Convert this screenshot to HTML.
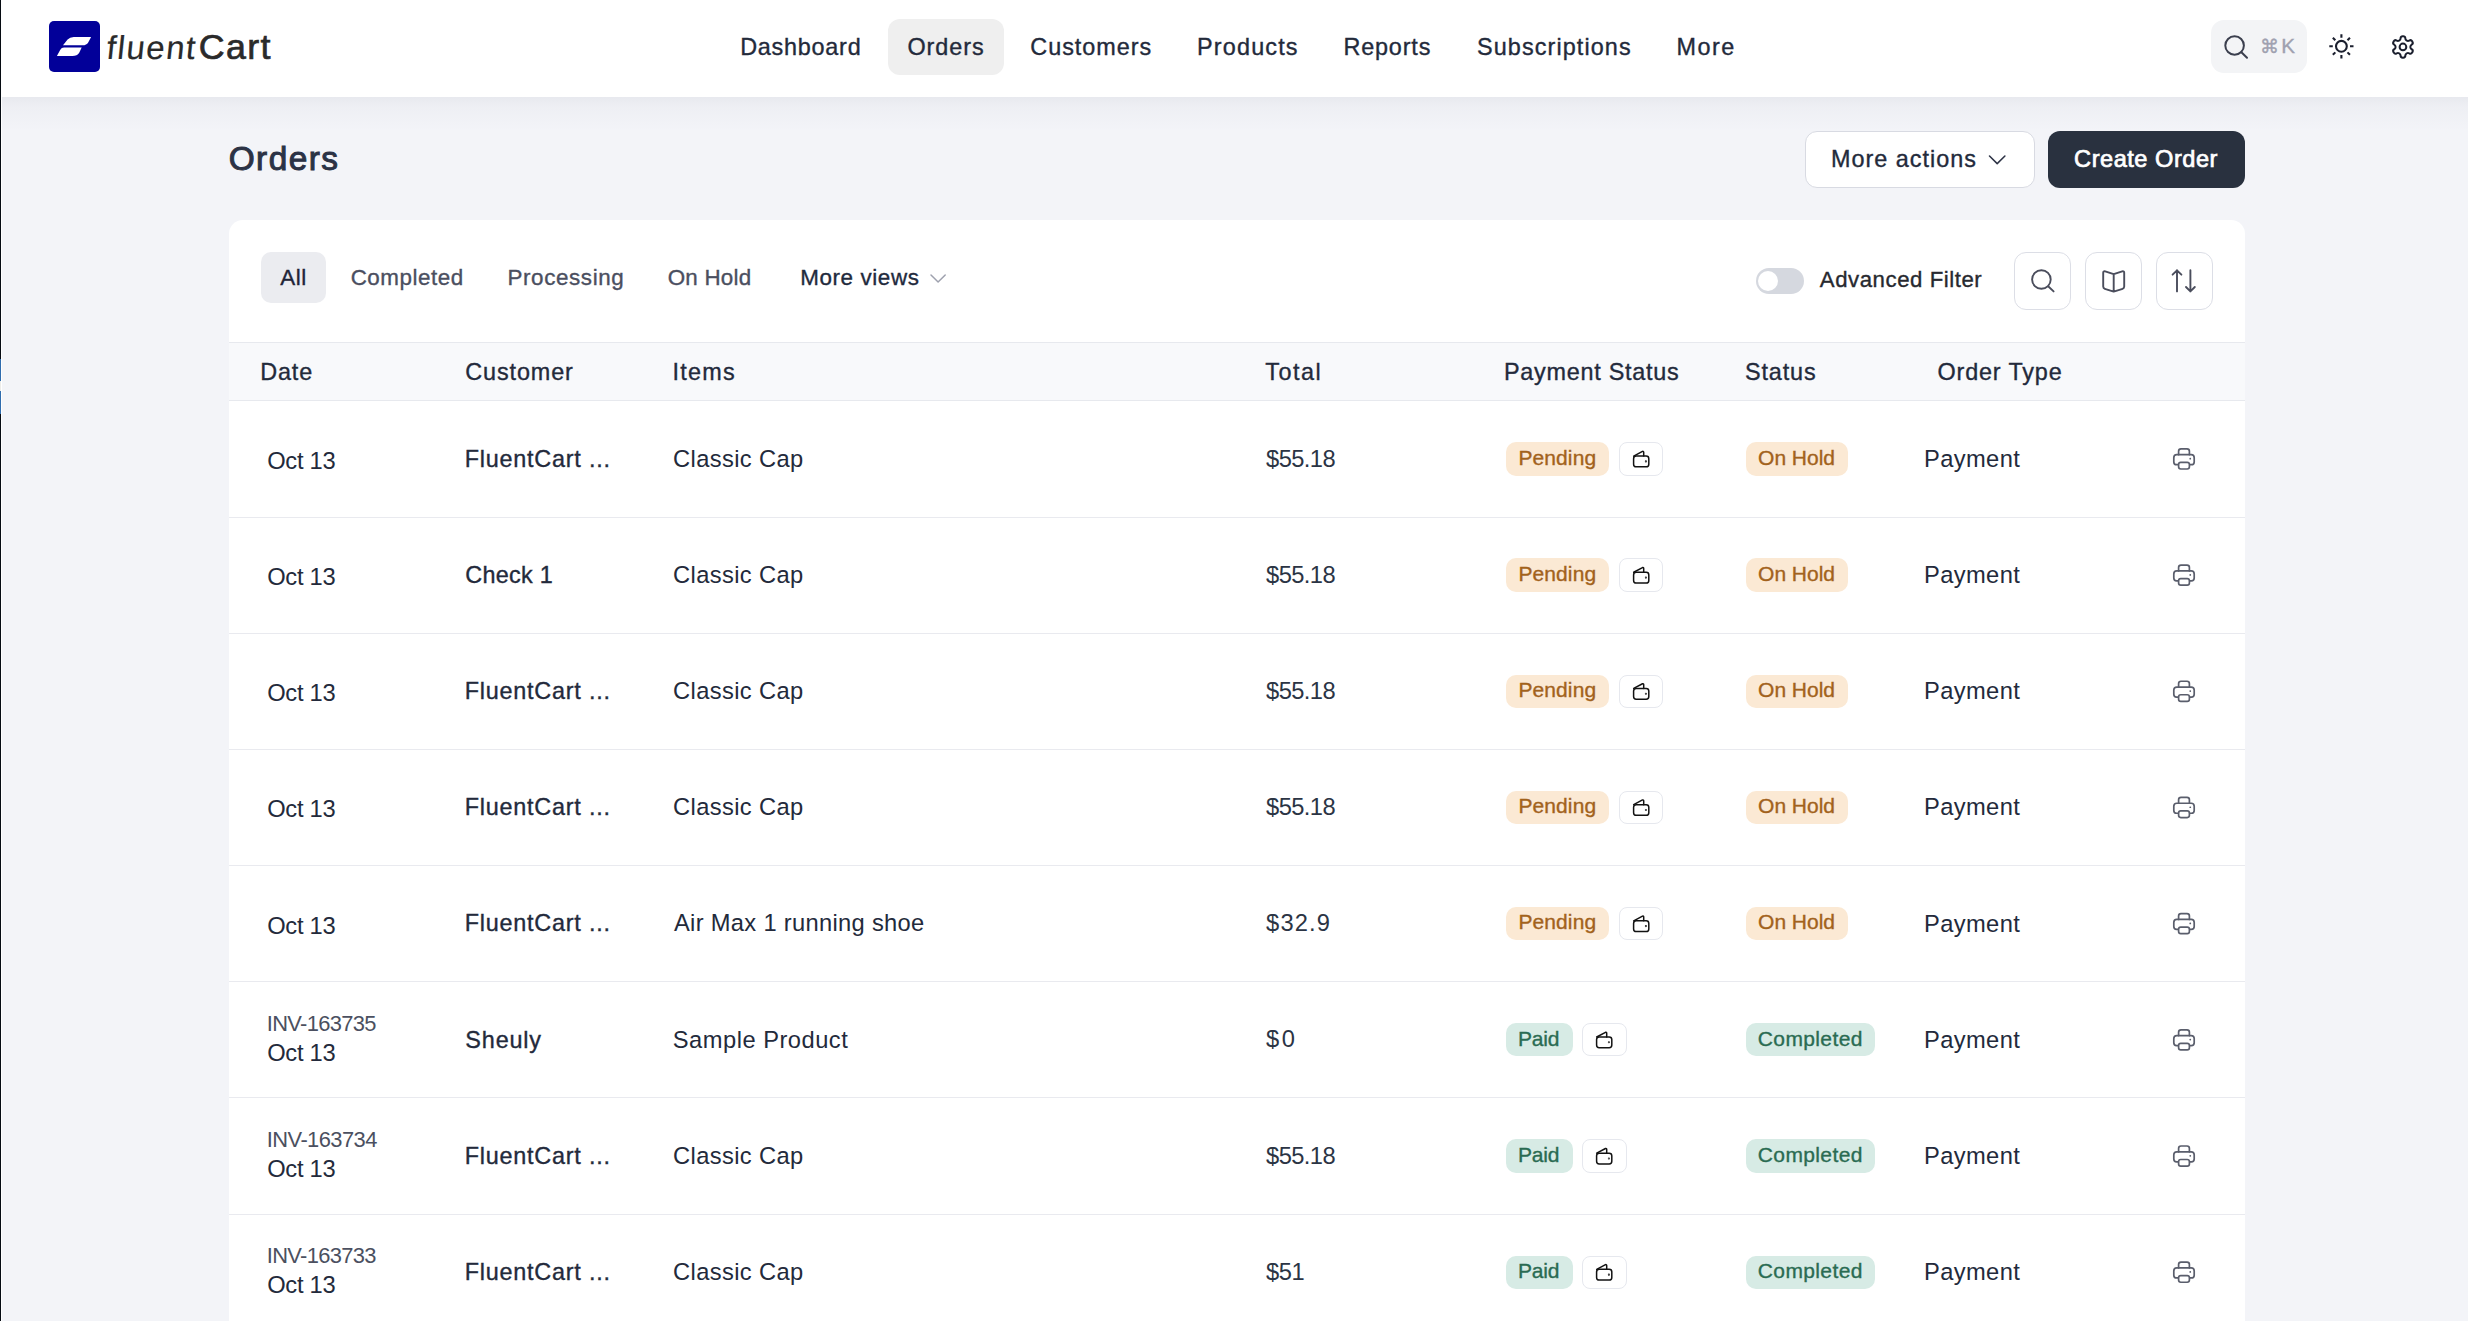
<!DOCTYPE html>
<html><head><meta charset="utf-8"><title>Orders - FluentCart</title><style>
body{margin:0;width:2468px;height:1321px;overflow:hidden;background:#f3f4f8;position:relative;font-family:"Liberation Sans",sans-serif}
.t{position:absolute;line-height:1;white-space:nowrap}
.a{position:absolute;box-sizing:border-box}
svg{position:absolute;overflow:visible}
</style></head><body>
<div class="a" style="left:0px;top:0px;width:1px;height:1321px;background:#060b12"></div>
<div class="a" style="left:1px;top:0px;width:1px;height:1321px;background:#ffffff"></div>
<div class="a" style="left:0px;top:359px;width:1px;height:22px;background:#2f6cae"></div>
<div class="a" style="left:0px;top:391px;width:1px;height:23px;background:#2f6cae"></div>
<div class="a" style="left:0px;top:381px;width:1px;height:10px;background:#ecebe8"></div>
<div class="a" style="left:2px;top:97px;width:2466px;height:34px;background:linear-gradient(rgba(25,30,60,0.05),rgba(25,30,60,0.022) 30%,rgba(25,30,60,0))"></div>
<div class="a" style="left:2px;top:0px;width:2466px;height:97px;background:#fff"></div>
<div class="a" style="left:49px;top:21px;width:51px;height:51px;background:#020099;border-radius:5px"></div>
<svg style="left:0;top:0" width="1" height="1"><path fill="#fff" d="M63,45.2 L67.6,39.6 Q69.8,37 73.8,37 L91.1,37 L88.2,42.4 Q86.6,45.2 82.6,45.2 Z M56.9,56 L60.3,49.8 Q61.5,47.6 64,47.6 L81.7,47.6 L79.2,52.8 Q77.2,56 72.4,56 Z"/></svg>
<div class="a" style="left:888px;top:19px;width:116px;height:56px;background:#efefef;border-radius:12px"></div>
<div class="a" style="left:2211px;top:20px;width:96px;height:53px;background:#f3f4f6;border-radius:13px"></div>
<svg style="left:0;top:0" width="1" height="1"><g fill="none" stroke="#3b3f4e" stroke-width="2" stroke-linecap="round"><circle cx="2234.6" cy="45.5" r="9.3"/><path d="M2241.4,52.2 L2247,57.8"/></g></svg>
<svg style="left:0;top:0" width="1" height="1"><g fill="none" stroke="#1b1f2e" stroke-width="2.1"><circle cx="2341.4" cy="46.3" r="5.4"/><path d="M2350.00,46.30 L2353.50,46.30 M2347.48,52.38 L2349.96,54.86 M2341.40,54.90 L2341.40,58.40 M2335.32,52.38 L2332.84,54.86 M2332.80,46.30 L2329.30,46.30 M2335.32,40.22 L2332.84,37.74 M2341.40,37.70 L2341.40,34.20 M2347.48,40.22 L2349.96,37.74"/></g></svg>
<svg style="left:2390.04px;top:33.94px" width="25.92" height="25.92" viewBox="0 0 24 24"><g fill="none" stroke="#1b1f2e" stroke-width="1.852" stroke-linecap="round" stroke-linejoin="round"><path d="M12.22 2h-.44a2 2 0 0 0-2 2v.18a2 2 0 0 1-1 1.73l-.43.25a2 2 0 0 1-2 0l-.15-.08a2 2 0 0 0-2.73.73l-.22.38a2 2 0 0 0 .73 2.73l.15.1a2 2 0 0 1 1 1.72v.51a2 2 0 0 1-1 1.74l-.15.09a2 2 0 0 0-.73 2.73l.22.38a2 2 0 0 0 2.73.73l.15-.08a2 2 0 0 1 2 0l.43.25a2 2 0 0 1 1 1.73V20a2 2 0 0 0 2 2h.44a2 2 0 0 0 2-2v-.18a2 2 0 0 1 1-1.73l.43-.25a2 2 0 0 1 2 0l.15.08a2 2 0 0 0 2.73-.73l.22-.39a2 2 0 0 0-.73-2.73l-.15-.08a2 2 0 0 1-1-1.74v-.5a2 2 0 0 1 1-1.74l.15-.09a2 2 0 0 0 .73-2.73l-.22-.38a2 2 0 0 0-2.73-.73l-.15.08a2 2 0 0 1-2 0l-.43-.25a2 2 0 0 1-1-1.73V4a2 2 0 0 0-2-2z"/><circle cx="12" cy="12" r="3.1"/></g></svg>
<div class="a" style="left:1805px;top:131px;width:230px;height:57px;background:#fff;border:1px solid #d8dae2;border-radius:12px"></div>
<svg style="left:0;top:0" width="1" height="1"><path d="M1989.5,156 L1997.2,163.6 L2004.9,156" fill="none" stroke="#2d3345" stroke-width="1.55" stroke-linecap="round" stroke-linejoin="round"/></svg>
<div class="a" style="left:2048px;top:131px;width:197px;height:57px;background:#29313f;border-radius:12px"></div>
<div class="a" style="left:229px;top:220px;width:2016px;height:1200px;background:#fff;border-radius:14px"></div>
<div class="a" style="left:261px;top:252px;width:65px;height:51px;background:#ebecf0;border-radius:10px"></div>
<svg style="left:0;top:0" width="1" height="1"><path d="M931,275 L938.1,282 L945.2,275" fill="none" stroke="#9ea1ae" stroke-width="1.5" stroke-linecap="round" stroke-linejoin="round"/></svg>
<div class="a" style="left:1756px;top:268px;width:48px;height:26px;background:#d5d8df;border-radius:13px"></div>
<div class="a" style="left:1757.5px;top:270.7px;width:20.4px;height:20.4px;background:#fff;border-radius:50%"></div>
<div class="a" style="left:2014px;top:252px;width:57px;height:58px;background:#fff;border:1px solid #dcdee6;border-radius:12px"></div>
<div class="a" style="left:2085px;top:252px;width:57px;height:58px;background:#fff;border:1px solid #dcdee6;border-radius:12px"></div>
<div class="a" style="left:2156px;top:252px;width:57px;height:58px;background:#fff;border:1px solid #dcdee6;border-radius:12px"></div>
<svg style="left:0;top:0" width="1" height="1"><g fill="none" stroke="#4a4d5c" stroke-width="1.9" stroke-linecap="round" stroke-linejoin="round"><circle cx="2041.4" cy="279.5" r="9.3"/><path d="M2048.4,286.5 L2053.6,291.4"/><path d="M2113.7,274.2 L2105.2,271.3 Q2103.2,270.8 2103.2,272.8 L2103.2,286.6 Q2103.2,288.3 2104.8,288.8 L2113.7,291.6 L2122.6,288.8 Q2124.2,288.3 2124.2,286.6 L2124.2,272.8 Q2124.2,270.8 2122.2,271.3 L2113.7,274.2 Z M2113.7,274.2 L2113.7,291.6"/><path d="M2177,291.4 L2177,270.3 M2172.6,274.7 L2177,270.3 L2181.4,274.7 M2190.4,270.3 L2190.4,291.4 M2186,287 L2190.4,291.4 L2194.8,287"/></g></svg>
<div class="a" style="left:229px;top:342px;width:2016px;height:59px;background:#f8f9fb;border-top:1px solid #e7e9ee;border-bottom:1px solid #e7e9ee"></div>
<div class="a" style="left:229px;top:517px;width:2016px;height:1px;background:#e9eaef"></div>
<div class="a" style="left:1506px;top:442.3px;width:103px;height:33.3px;background:#fbe9d4;border-radius:10px"></div>
<div class="a" style="left:1619px;top:442.3px;width:44px;height:33.3px;background:#fff;border:1px solid #e6e8ee;border-radius:8px"></div>
<div class="a" style="left:1746px;top:442.3px;width:102px;height:33.3px;background:#fbe9d4;border-radius:10px"></div>
<div class="a" style="left:229px;top:633px;width:2016px;height:1px;background:#e9eaef"></div>
<div class="a" style="left:1506px;top:558.48px;width:103px;height:33.3px;background:#fbe9d4;border-radius:10px"></div>
<div class="a" style="left:1619px;top:558.48px;width:44px;height:33.3px;background:#fff;border:1px solid #e6e8ee;border-radius:8px"></div>
<div class="a" style="left:1746px;top:558.48px;width:102px;height:33.3px;background:#fbe9d4;border-radius:10px"></div>
<div class="a" style="left:229px;top:749px;width:2016px;height:1px;background:#e9eaef"></div>
<div class="a" style="left:1506px;top:674.66px;width:103px;height:33.3px;background:#fbe9d4;border-radius:10px"></div>
<div class="a" style="left:1619px;top:674.66px;width:44px;height:33.3px;background:#fff;border:1px solid #e6e8ee;border-radius:8px"></div>
<div class="a" style="left:1746px;top:674.66px;width:102px;height:33.3px;background:#fbe9d4;border-radius:10px"></div>
<div class="a" style="left:229px;top:865px;width:2016px;height:1px;background:#e9eaef"></div>
<div class="a" style="left:1506px;top:790.84px;width:103px;height:33.3px;background:#fbe9d4;border-radius:10px"></div>
<div class="a" style="left:1619px;top:790.84px;width:44px;height:33.3px;background:#fff;border:1px solid #e6e8ee;border-radius:8px"></div>
<div class="a" style="left:1746px;top:790.84px;width:102px;height:33.3px;background:#fbe9d4;border-radius:10px"></div>
<div class="a" style="left:229px;top:981px;width:2016px;height:1px;background:#e9eaef"></div>
<div class="a" style="left:1506px;top:907.02px;width:103px;height:33.3px;background:#fbe9d4;border-radius:10px"></div>
<div class="a" style="left:1619px;top:907.02px;width:44px;height:33.3px;background:#fff;border:1px solid #e6e8ee;border-radius:8px"></div>
<div class="a" style="left:1746px;top:907.02px;width:102px;height:33.3px;background:#fbe9d4;border-radius:10px"></div>
<div class="a" style="left:229px;top:1097px;width:2016px;height:1px;background:#e9eaef"></div>
<div class="a" style="left:1506px;top:1023.2px;width:67px;height:33.3px;background:#d7ebe5;border-radius:10px"></div>
<div class="a" style="left:1582px;top:1023.2px;width:45px;height:33.3px;background:#fff;border:1px solid #e6e8ee;border-radius:8px"></div>
<div class="a" style="left:1746px;top:1023.2px;width:129px;height:33.3px;background:#d7ebe5;border-radius:10px"></div>
<div class="a" style="left:229px;top:1214px;width:2016px;height:1px;background:#e9eaef"></div>
<div class="a" style="left:1506px;top:1139.38px;width:67px;height:33.3px;background:#d7ebe5;border-radius:10px"></div>
<div class="a" style="left:1582px;top:1139.38px;width:45px;height:33.3px;background:#fff;border:1px solid #e6e8ee;border-radius:8px"></div>
<div class="a" style="left:1746px;top:1139.38px;width:129px;height:33.3px;background:#d7ebe5;border-radius:10px"></div>
<div class="a" style="left:229px;top:1330px;width:2016px;height:1px;background:#e9eaef"></div>
<div class="a" style="left:1506px;top:1255.56px;width:67px;height:33.3px;background:#d7ebe5;border-radius:10px"></div>
<div class="a" style="left:1582px;top:1255.56px;width:45px;height:33.3px;background:#fff;border:1px solid #e6e8ee;border-radius:8px"></div>
<div class="a" style="left:1746px;top:1255.56px;width:129px;height:33.3px;background:#d7ebe5;border-radius:10px"></div>
<svg style="left:0;top:0" width="1" height="1"><g fill="none" stroke="#121212" stroke-width="1.5" stroke-linecap="round" stroke-linejoin="round"><path d="M1633.7,456.1 L1642.5,451.40000000000003 Q1643.6,451.1 1643.7,452.3 L1643.7,456.1"/><rect x="1633.6" y="456.1" width="15.2" height="10.7" rx="2.6"/><circle cx="1645.9" cy="461.40000000000003" r="0.3" fill="#111"/><path d="M1633.7,572.28 L1642.5,567.58 Q1643.6,567.28 1643.7,568.48 L1643.7,572.28"/><rect x="1633.6" y="572.28" width="15.2" height="10.7" rx="2.6"/><circle cx="1645.9" cy="577.58" r="0.3" fill="#111"/><path d="M1633.7,688.4599999999999 L1642.5,683.76 Q1643.6,683.4599999999999 1643.7,684.66 L1643.7,688.4599999999999"/><rect x="1633.6" y="688.4599999999999" width="15.2" height="10.7" rx="2.6"/><circle cx="1645.9" cy="693.76" r="0.3" fill="#111"/><path d="M1633.7,804.6399999999999 L1642.5,799.9399999999999 Q1643.6,799.6399999999999 1643.7,800.8399999999999 L1643.7,804.6399999999999"/><rect x="1633.6" y="804.6399999999999" width="15.2" height="10.7" rx="2.6"/><circle cx="1645.9" cy="809.9399999999999" r="0.3" fill="#111"/><path d="M1633.7,920.8199999999999 L1642.5,916.12 Q1643.6,915.8199999999999 1643.7,917.02 L1643.7,920.8199999999999"/><rect x="1633.6" y="920.8199999999999" width="15.2" height="10.7" rx="2.6"/><circle cx="1645.9" cy="926.12" r="0.3" fill="#111"/><path d="M1596.7,1037.0 L1605.5,1032.3 Q1606.6,1032.0 1606.7,1033.2 L1606.7,1037.0"/><rect x="1596.6" y="1037.0" width="15.2" height="10.7" rx="2.6"/><circle cx="1608.9" cy="1042.3" r="0.3" fill="#111"/><path d="M1596.7,1153.1799999999998 L1605.5,1148.4799999999998 Q1606.6,1148.1799999999998 1606.7,1149.3799999999999 L1606.7,1153.1799999999998"/><rect x="1596.6" y="1153.1799999999998" width="15.2" height="10.7" rx="2.6"/><circle cx="1608.9" cy="1158.4799999999998" r="0.3" fill="#111"/><path d="M1596.7,1269.36 L1605.5,1264.6599999999999 Q1606.6,1264.36 1606.7,1265.56 L1606.7,1269.36"/><rect x="1596.6" y="1269.36" width="15.2" height="10.7" rx="2.6"/><circle cx="1608.9" cy="1274.6599999999999" r="0.3" fill="#111"/></g><g fill="none" stroke="#5a5e6c" stroke-width="1.7" stroke-linecap="round" stroke-linejoin="round"><path d="M2178.6,454.70000000000005 L2178.6,451.3 Q2178.6,448.90000000000003 2181,448.90000000000003 L2187,448.90000000000003 Q2189.4,448.90000000000003 2189.4,451.3 L2189.4,454.70000000000005"/><path d="M2178.2,464.70000000000005 L2176.6,464.70000000000005 Q2173.8,464.70000000000005 2173.8,461.90000000000003 L2173.8,457.70000000000005 Q2173.8,454.70000000000005 2176.8,454.70000000000005 L2191.2,454.70000000000005 Q2194.2,454.70000000000005 2194.2,457.70000000000005 L2194.2,461.90000000000003 Q2194.2,464.70000000000005 2191.4,464.70000000000005 L2189.8,464.70000000000005"/><rect x="2178.6" y="462.40000000000003" width="10.8" height="6.6" rx="2.2"/><path d="M2190.2,458.70000000000005 L2190.3,458.70000000000005"/><path d="M2178.6,570.8800000000001 L2178.6,567.4800000000001 Q2178.6,565.08 2181,565.08 L2187,565.08 Q2189.4,565.08 2189.4,567.4800000000001 L2189.4,570.8800000000001"/><path d="M2178.2,580.8800000000001 L2176.6,580.8800000000001 Q2173.8,580.8800000000001 2173.8,578.08 L2173.8,573.8800000000001 Q2173.8,570.8800000000001 2176.8,570.8800000000001 L2191.2,570.8800000000001 Q2194.2,570.8800000000001 2194.2,573.8800000000001 L2194.2,578.08 Q2194.2,580.8800000000001 2191.4,580.8800000000001 L2189.8,580.8800000000001"/><rect x="2178.6" y="578.58" width="10.8" height="6.6" rx="2.2"/><path d="M2190.2,574.8800000000001 L2190.3,574.8800000000001"/><path d="M2178.6,687.0600000000001 L2178.6,683.6600000000001 Q2178.6,681.26 2181,681.26 L2187,681.26 Q2189.4,681.26 2189.4,683.6600000000001 L2189.4,687.0600000000001"/><path d="M2178.2,697.0600000000001 L2176.6,697.0600000000001 Q2173.8,697.0600000000001 2173.8,694.26 L2173.8,690.0600000000001 Q2173.8,687.0600000000001 2176.8,687.0600000000001 L2191.2,687.0600000000001 Q2194.2,687.0600000000001 2194.2,690.0600000000001 L2194.2,694.26 Q2194.2,697.0600000000001 2191.4,697.0600000000001 L2189.8,697.0600000000001"/><rect x="2178.6" y="694.76" width="10.8" height="6.6" rx="2.2"/><path d="M2190.2,691.0600000000001 L2190.3,691.0600000000001"/><path d="M2178.6,803.24 L2178.6,799.84 Q2178.6,797.4399999999999 2181,797.4399999999999 L2187,797.4399999999999 Q2189.4,797.4399999999999 2189.4,799.84 L2189.4,803.24"/><path d="M2178.2,813.24 L2176.6,813.24 Q2173.8,813.24 2173.8,810.4399999999999 L2173.8,806.24 Q2173.8,803.24 2176.8,803.24 L2191.2,803.24 Q2194.2,803.24 2194.2,806.24 L2194.2,810.4399999999999 Q2194.2,813.24 2191.4,813.24 L2189.8,813.24"/><rect x="2178.6" y="810.9399999999999" width="10.8" height="6.6" rx="2.2"/><path d="M2190.2,807.24 L2190.3,807.24"/><path d="M2178.6,919.4200000000001 L2178.6,916.0200000000001 Q2178.6,913.62 2181,913.62 L2187,913.62 Q2189.4,913.62 2189.4,916.0200000000001 L2189.4,919.4200000000001"/><path d="M2178.2,929.4200000000001 L2176.6,929.4200000000001 Q2173.8,929.4200000000001 2173.8,926.62 L2173.8,922.4200000000001 Q2173.8,919.4200000000001 2176.8,919.4200000000001 L2191.2,919.4200000000001 Q2194.2,919.4200000000001 2194.2,922.4200000000001 L2194.2,926.62 Q2194.2,929.4200000000001 2191.4,929.4200000000001 L2189.8,929.4200000000001"/><rect x="2178.6" y="927.12" width="10.8" height="6.6" rx="2.2"/><path d="M2190.2,923.4200000000001 L2190.3,923.4200000000001"/><path d="M2178.6,1035.6 L2178.6,1032.2 Q2178.6,1029.8 2181,1029.8 L2187,1029.8 Q2189.4,1029.8 2189.4,1032.2 L2189.4,1035.6"/><path d="M2178.2,1045.6 L2176.6,1045.6 Q2173.8,1045.6 2173.8,1042.8 L2173.8,1038.6 Q2173.8,1035.6 2176.8,1035.6 L2191.2,1035.6 Q2194.2,1035.6 2194.2,1038.6 L2194.2,1042.8 Q2194.2,1045.6 2191.4,1045.6 L2189.8,1045.6"/><rect x="2178.6" y="1043.3" width="10.8" height="6.6" rx="2.2"/><path d="M2190.2,1039.6 L2190.3,1039.6"/><path d="M2178.6,1151.7799999999997 L2178.6,1148.3799999999999 Q2178.6,1145.9799999999998 2181,1145.9799999999998 L2187,1145.9799999999998 Q2189.4,1145.9799999999998 2189.4,1148.3799999999999 L2189.4,1151.7799999999997"/><path d="M2178.2,1161.7799999999997 L2176.6,1161.7799999999997 Q2173.8,1161.7799999999997 2173.8,1158.9799999999998 L2173.8,1154.7799999999997 Q2173.8,1151.7799999999997 2176.8,1151.7799999999997 L2191.2,1151.7799999999997 Q2194.2,1151.7799999999997 2194.2,1154.7799999999997 L2194.2,1158.9799999999998 Q2194.2,1161.7799999999997 2191.4,1161.7799999999997 L2189.8,1161.7799999999997"/><rect x="2178.6" y="1159.4799999999998" width="10.8" height="6.6" rx="2.2"/><path d="M2190.2,1155.7799999999997 L2190.3,1155.7799999999997"/><path d="M2178.6,1267.9599999999998 L2178.6,1264.56 Q2178.6,1262.1599999999999 2181,1262.1599999999999 L2187,1262.1599999999999 Q2189.4,1262.1599999999999 2189.4,1264.56 L2189.4,1267.9599999999998"/><path d="M2178.2,1277.9599999999998 L2176.6,1277.9599999999998 Q2173.8,1277.9599999999998 2173.8,1275.1599999999999 L2173.8,1270.9599999999998 Q2173.8,1267.9599999999998 2176.8,1267.9599999999998 L2191.2,1267.9599999999998 Q2194.2,1267.9599999999998 2194.2,1270.9599999999998 L2194.2,1275.1599999999999 Q2194.2,1277.9599999999998 2191.4,1277.9599999999998 L2189.8,1277.9599999999998"/><rect x="2178.6" y="1275.6599999999999" width="10.8" height="6.6" rx="2.2"/><path d="M2190.2,1271.9599999999998 L2190.3,1271.9599999999998"/></g></svg>
<div class="t" id="nav0" style="left:740.23px;top:35.87px;font-size:23.4px;letter-spacing:0.749px;font-weight:400;-webkit-text-stroke:0.35px currentColor;color:#232a3b">Dashboard</div>
<div class="t" id="nav1" style="left:907.47px;top:35.88px;font-size:23.4px;letter-spacing:0.961px;font-weight:400;-webkit-text-stroke:0.35px currentColor;color:#232a3b">Orders</div>
<div class="t" id="nav2" style="left:1030.35px;top:35.55px;font-size:23.4px;letter-spacing:0.974px;font-weight:400;-webkit-text-stroke:0.35px currentColor;color:#232a3b">Customers</div>
<div class="t" id="nav3" style="left:1197.12px;top:35.81px;font-size:23.4px;letter-spacing:1.162px;font-weight:400;-webkit-text-stroke:0.35px currentColor;color:#232a3b">Products</div>
<div class="t" id="nav4" style="left:1343.40px;top:35.55px;font-size:23.4px;letter-spacing:0.850px;font-weight:400;-webkit-text-stroke:0.35px currentColor;color:#232a3b">Reports</div>
<div class="t" id="nav5" style="left:1477.03px;top:35.75px;font-size:23.4px;letter-spacing:1.096px;font-weight:400;-webkit-text-stroke:0.35px currentColor;color:#232a3b">Subscriptions</div>
<div class="t" id="nav6" style="left:1676.60px;top:36.00px;font-size:23.4px;letter-spacing:1.437px;font-weight:400;-webkit-text-stroke:0.35px currentColor;color:#232a3b">More</div>
<div class="t" id="logo1" style="left:106.10px;top:30.62px;font-size:33px;letter-spacing:1.525px;font-weight:400;transform:skewX(-6deg);transform-origin:0 80%;-webkit-text-stroke:0.2px currentColor;color:#2a2a2a">fluent</div>
<div class="t" id="logo2" style="left:198.85px;top:29.50px;font-size:35.8px;letter-spacing:1.353px;font-weight:400;-webkit-text-stroke:0.7px currentColor;color:#2a2a2a">Cart</div>
<div class="t" id="kbd" style="left:2260.46px;top:37.39px;font-size:19.2px;letter-spacing:-6.706px;font-weight:400;-webkit-text-stroke:0.35px currentColor;color:#9fa1b0">⌘</div>
<div class="t" id="kbdk" style="left:2281.30px;top:36.17px;font-size:20.6px;letter-spacing:-7.439px;font-weight:400;-webkit-text-stroke:0.35px currentColor;color:#9fa1b0">K</div>
<div class="t" id="title" style="left:228.71px;top:141.62px;font-size:33.4px;letter-spacing:1.438px;font-weight:400;-webkit-text-stroke:1.0px currentColor;color:#2b3245">Orders</div>
<div class="t" id="moreact" style="left:1831.12px;top:147.89px;font-size:23.4px;letter-spacing:0.984px;font-weight:400;-webkit-text-stroke:0.35px currentColor;color:#232a3b">More actions</div>
<div class="t" id="create" style="left:2074.10px;top:148.40px;font-size:23.6px;letter-spacing:0.516px;font-weight:400;-webkit-text-stroke:0.7px currentColor;color:#ffffff">Create Order</div>
<div class="t" id="tab0" style="left:280.27px;top:266.57px;font-size:22.4px;letter-spacing:0.567px;font-weight:400;-webkit-text-stroke:0.35px currentColor;color:#1f2538">All</div>
<div class="t" id="tab1" style="left:350.64px;top:266.56px;font-size:22.4px;letter-spacing:0.527px;font-weight:400;-webkit-text-stroke:0.35px currentColor;color:#4b4f5f">Completed</div>
<div class="t" id="tab2" style="left:507.50px;top:266.82px;font-size:22.4px;letter-spacing:0.610px;font-weight:400;-webkit-text-stroke:0.35px currentColor;color:#4b4f5f">Processing</div>
<div class="t" id="tab3" style="left:667.67px;top:266.75px;font-size:22.4px;letter-spacing:0.235px;font-weight:400;-webkit-text-stroke:0.35px currentColor;color:#4b4f5f">On Hold</div>
<div class="t" id="tab4" style="left:800.20px;top:266.95px;font-size:22.4px;letter-spacing:0.606px;font-weight:400;-webkit-text-stroke:0.35px currentColor;color:#1f2a3d">More views</div>
<div class="t" id="advf" style="left:1819.84px;top:268.94px;font-size:22.2px;letter-spacing:0.554px;font-weight:400;-webkit-text-stroke:0.35px currentColor;color:#27292f">Advanced Filter</div>
<div class="t" id="h0" style="left:260.23px;top:360.60px;font-size:23.4px;letter-spacing:0.855px;font-weight:400;-webkit-text-stroke:0.35px currentColor;color:#232a3b">Date</div>
<div class="t" id="h1" style="left:465.20px;top:360.86px;font-size:23.4px;letter-spacing:0.904px;font-weight:400;-webkit-text-stroke:0.35px currentColor;color:#232a3b">Customer</div>
<div class="t" id="h2" style="left:672.45px;top:360.70px;font-size:23.4px;letter-spacing:1.267px;font-weight:400;-webkit-text-stroke:0.35px currentColor;color:#232a3b">Items</div>
<div class="t" id="h3" style="left:1265.29px;top:360.62px;font-size:23.4px;letter-spacing:1.477px;font-weight:400;-webkit-text-stroke:0.35px currentColor;color:#232a3b">Total</div>
<div class="t" id="h4" style="left:1503.96px;top:360.85px;font-size:23.4px;letter-spacing:0.743px;font-weight:400;-webkit-text-stroke:0.35px currentColor;color:#232a3b">Payment Status</div>
<div class="t" id="h5" style="left:1744.90px;top:360.94px;font-size:23.4px;letter-spacing:0.889px;font-weight:400;-webkit-text-stroke:0.35px currentColor;color:#232a3b">Status</div>
<div class="t" id="h6" style="left:1937.47px;top:360.74px;font-size:23.4px;letter-spacing:0.851px;font-weight:400;-webkit-text-stroke:0.35px currentColor;color:#232a3b">Order Type</div>
<div class="t" id="r0date" style="left:267.19px;top:449.73px;font-size:23.7px;letter-spacing:-0.271px;font-weight:400;color:#232a3b">Oct 13</div>
<div class="t" id="r0cust" style="left:464.74px;top:447.89px;font-size:23.4px;letter-spacing:0.771px;font-weight:400;-webkit-text-stroke:0.35px currentColor;color:#232a3b">FluentCart ...</div>
<div class="t" id="r0item" style="left:673.02px;top:447.81px;font-size:23.7px;letter-spacing:0.382px;font-weight:400;color:#232a3b">Classic Cap</div>
<div class="t" id="r0tot" style="left:1266.04px;top:447.59px;font-size:23.7px;letter-spacing:-0.572px;font-weight:400;color:#2b3444">$55.18</div>
<div class="t" id="r0pay" style="left:1923.94px;top:447.74px;font-size:23.7px;letter-spacing:0.405px;font-weight:400;color:#232a3b">Payment</div>
<div class="t" id="r0b1" style="left:1518.39px;top:446.90px;font-size:21.0px;letter-spacing:0.110px;font-weight:400;-webkit-text-stroke:0.35px currentColor;color:#a2621c">Pending</div>
<div class="t" id="r0b2" style="left:1758.12px;top:446.59px;font-size:21.0px;letter-spacing:-0.030px;font-weight:400;-webkit-text-stroke:0.35px currentColor;color:#a2621c">On Hold</div>
<div class="t" id="r1date" style="left:267.19px;top:565.51px;font-size:23.7px;letter-spacing:-0.271px;font-weight:400;color:#232a3b">Oct 13</div>
<div class="t" id="r1cust" style="left:465.35px;top:563.66px;font-size:23.4px;letter-spacing:0.271px;font-weight:400;-webkit-text-stroke:0.35px currentColor;color:#232a3b">Check 1</div>
<div class="t" id="r1item" style="left:673.02px;top:563.53px;font-size:23.7px;letter-spacing:0.382px;font-weight:400;color:#232a3b">Classic Cap</div>
<div class="t" id="r1tot" style="left:1266.04px;top:563.80px;font-size:23.7px;letter-spacing:-0.572px;font-weight:400;color:#2b3444">$55.18</div>
<div class="t" id="r1pay" style="left:1923.94px;top:564.32px;font-size:23.7px;letter-spacing:0.405px;font-weight:400;color:#232a3b">Payment</div>
<div class="t" id="r1b1" style="left:1518.39px;top:563.00px;font-size:21.0px;letter-spacing:0.110px;font-weight:400;-webkit-text-stroke:0.35px currentColor;color:#a2621c">Pending</div>
<div class="t" id="r1b2" style="left:1758.12px;top:562.98px;font-size:21.0px;letter-spacing:-0.030px;font-weight:400;-webkit-text-stroke:0.35px currentColor;color:#a2621c">On Hold</div>
<div class="t" id="r2date" style="left:267.19px;top:682.29px;font-size:23.7px;letter-spacing:-0.271px;font-weight:400;color:#232a3b">Oct 13</div>
<div class="t" id="r2cust" style="left:464.74px;top:680.18px;font-size:23.4px;letter-spacing:0.771px;font-weight:400;-webkit-text-stroke:0.35px currentColor;color:#232a3b">FluentCart ...</div>
<div class="t" id="r2item" style="left:673.02px;top:680.49px;font-size:23.7px;letter-spacing:0.382px;font-weight:400;color:#232a3b">Classic Cap</div>
<div class="t" id="r2tot" style="left:1266.04px;top:680.40px;font-size:23.7px;letter-spacing:-0.572px;font-weight:400;color:#2b3444">$55.18</div>
<div class="t" id="r2pay" style="left:1923.94px;top:680.21px;font-size:23.7px;letter-spacing:0.405px;font-weight:400;color:#232a3b">Payment</div>
<div class="t" id="r2b1" style="left:1518.39px;top:679.45px;font-size:21.0px;letter-spacing:0.110px;font-weight:400;-webkit-text-stroke:0.35px currentColor;color:#a2621c">Pending</div>
<div class="t" id="r2b2" style="left:1758.12px;top:679.05px;font-size:21.0px;letter-spacing:-0.030px;font-weight:400;-webkit-text-stroke:0.35px currentColor;color:#a2621c">On Hold</div>
<div class="t" id="r3date" style="left:267.19px;top:798.07px;font-size:23.7px;letter-spacing:-0.271px;font-weight:400;color:#232a3b">Oct 13</div>
<div class="t" id="r3cust" style="left:464.74px;top:796.30px;font-size:23.4px;letter-spacing:0.771px;font-weight:400;-webkit-text-stroke:0.35px currentColor;color:#232a3b">FluentCart ...</div>
<div class="t" id="r3item" style="left:673.02px;top:796.27px;font-size:23.7px;letter-spacing:0.382px;font-weight:400;color:#232a3b">Classic Cap</div>
<div class="t" id="r3tot" style="left:1266.04px;top:796.14px;font-size:23.7px;letter-spacing:-0.572px;font-weight:400;color:#2b3444">$55.18</div>
<div class="t" id="r3pay" style="left:1923.94px;top:796.10px;font-size:23.7px;letter-spacing:0.405px;font-weight:400;color:#232a3b">Payment</div>
<div class="t" id="r3b1" style="left:1518.39px;top:795.34px;font-size:21.0px;letter-spacing:0.110px;font-weight:400;-webkit-text-stroke:0.35px currentColor;color:#a2621c">Pending</div>
<div class="t" id="r3b2" style="left:1758.12px;top:795.31px;font-size:21.0px;letter-spacing:-0.030px;font-weight:400;-webkit-text-stroke:0.35px currentColor;color:#a2621c">On Hold</div>
<div class="t" id="r4date" style="left:267.19px;top:914.85px;font-size:23.7px;letter-spacing:-0.271px;font-weight:400;color:#232a3b">Oct 13</div>
<div class="t" id="r4cust" style="left:464.74px;top:912.36px;font-size:23.4px;letter-spacing:0.771px;font-weight:400;-webkit-text-stroke:0.35px currentColor;color:#232a3b">FluentCart ...</div>
<div class="t" id="r4item" style="left:673.97px;top:912.35px;font-size:23.7px;letter-spacing:0.320px;font-weight:400;color:#232a3b">Air Max 1 running shoe</div>
<div class="t" id="r4tot" style="left:1266.04px;top:912.40px;font-size:23.7px;letter-spacing:1.181px;font-weight:400;color:#2b3444">$32.9</div>
<div class="t" id="r4pay" style="left:1923.94px;top:912.78px;font-size:23.7px;letter-spacing:0.405px;font-weight:400;color:#232a3b">Payment</div>
<div class="t" id="r4b1" style="left:1518.39px;top:911.22px;font-size:21.0px;letter-spacing:0.110px;font-weight:400;-webkit-text-stroke:0.35px currentColor;color:#a2621c">Pending</div>
<div class="t" id="r4b2" style="left:1758.12px;top:911.40px;font-size:21.0px;letter-spacing:-0.030px;font-weight:400;-webkit-text-stroke:0.35px currentColor;color:#a2621c">On Hold</div>
<div class="t" id="r5inv" style="left:266.80px;top:1013.36px;font-size:21.9px;letter-spacing:-0.676px;font-weight:400;color:#4b5060">INV-163735</div>
<div class="t" id="r5date" style="left:267.19px;top:1041.73px;font-size:23.7px;letter-spacing:-0.271px;font-weight:400;color:#232a3b">Oct 13</div>
<div class="t" id="r5cust" style="left:465.35px;top:1028.70px;font-size:23.4px;letter-spacing:0.837px;font-weight:400;-webkit-text-stroke:0.35px currentColor;color:#232a3b">Sheuly</div>
<div class="t" id="r5item" style="left:672.82px;top:1028.77px;font-size:23.7px;letter-spacing:0.490px;font-weight:400;color:#232a3b">Sample Product</div>
<div class="t" id="r5tot" style="left:1266.04px;top:1028.49px;font-size:23.7px;letter-spacing:2.608px;font-weight:400;color:#2b3444">$0</div>
<div class="t" id="r5pay" style="left:1923.94px;top:1028.84px;font-size:23.7px;letter-spacing:0.405px;font-weight:400;color:#232a3b">Payment</div>
<div class="t" id="r5b1" style="left:1517.93px;top:1027.74px;font-size:21.0px;letter-spacing:-0.186px;font-weight:400;-webkit-text-stroke:0.35px currentColor;color:#2a6b52">Paid</div>
<div class="t" id="r5b2" style="left:1757.82px;top:1027.74px;font-size:21.0px;letter-spacing:0.375px;font-weight:400;-webkit-text-stroke:0.35px currentColor;color:#2a6b52">Completed</div>
<div class="t" id="r6inv" style="left:266.80px;top:1129.14px;font-size:21.9px;letter-spacing:-0.562px;font-weight:400;color:#4b5060">INV-163734</div>
<div class="t" id="r6date" style="left:267.19px;top:1157.51px;font-size:23.7px;letter-spacing:-0.271px;font-weight:400;color:#232a3b">Oct 13</div>
<div class="t" id="r6cust" style="left:464.74px;top:1144.56px;font-size:23.4px;letter-spacing:0.771px;font-weight:400;-webkit-text-stroke:0.35px currentColor;color:#232a3b">FluentCart ...</div>
<div class="t" id="r6item" style="left:673.02px;top:1144.73px;font-size:23.7px;letter-spacing:0.382px;font-weight:400;color:#232a3b">Classic Cap</div>
<div class="t" id="r6tot" style="left:1266.04px;top:1144.77px;font-size:23.7px;letter-spacing:-0.572px;font-weight:400;color:#2b3444">$55.18</div>
<div class="t" id="r6pay" style="left:1923.94px;top:1145.01px;font-size:23.7px;letter-spacing:0.405px;font-weight:400;color:#232a3b">Payment</div>
<div class="t" id="r6b1" style="left:1517.93px;top:1144.12px;font-size:21.0px;letter-spacing:-0.186px;font-weight:400;-webkit-text-stroke:0.35px currentColor;color:#2a6b52">Paid</div>
<div class="t" id="r6b2" style="left:1757.82px;top:1143.95px;font-size:21.0px;letter-spacing:0.375px;font-weight:400;-webkit-text-stroke:0.35px currentColor;color:#2a6b52">Completed</div>
<div class="t" id="r7inv" style="left:266.80px;top:1244.92px;font-size:21.9px;letter-spacing:-0.675px;font-weight:400;color:#4b5060">INV-163733</div>
<div class="t" id="r7date" style="left:267.19px;top:1274.29px;font-size:23.7px;letter-spacing:-0.271px;font-weight:400;color:#232a3b">Oct 13</div>
<div class="t" id="r7cust" style="left:464.74px;top:1260.78px;font-size:23.4px;letter-spacing:0.771px;font-weight:400;-webkit-text-stroke:0.35px currentColor;color:#232a3b">FluentCart ...</div>
<div class="t" id="r7item" style="left:673.02px;top:1261.39px;font-size:23.7px;letter-spacing:0.382px;font-weight:400;color:#232a3b">Classic Cap</div>
<div class="t" id="r7tot" style="left:1266.04px;top:1260.79px;font-size:23.7px;letter-spacing:-0.486px;font-weight:400;color:#2b3444">$51</div>
<div class="t" id="r7pay" style="left:1923.94px;top:1261.05px;font-size:23.7px;letter-spacing:0.405px;font-weight:400;color:#232a3b">Payment</div>
<div class="t" id="r7b1" style="left:1517.93px;top:1259.92px;font-size:21.0px;letter-spacing:-0.186px;font-weight:400;-webkit-text-stroke:0.35px currentColor;color:#2a6b52">Paid</div>
<div class="t" id="r7b2" style="left:1757.82px;top:1259.55px;font-size:21.0px;letter-spacing:0.375px;font-weight:400;-webkit-text-stroke:0.35px currentColor;color:#2a6b52">Completed</div>
</body></html>
